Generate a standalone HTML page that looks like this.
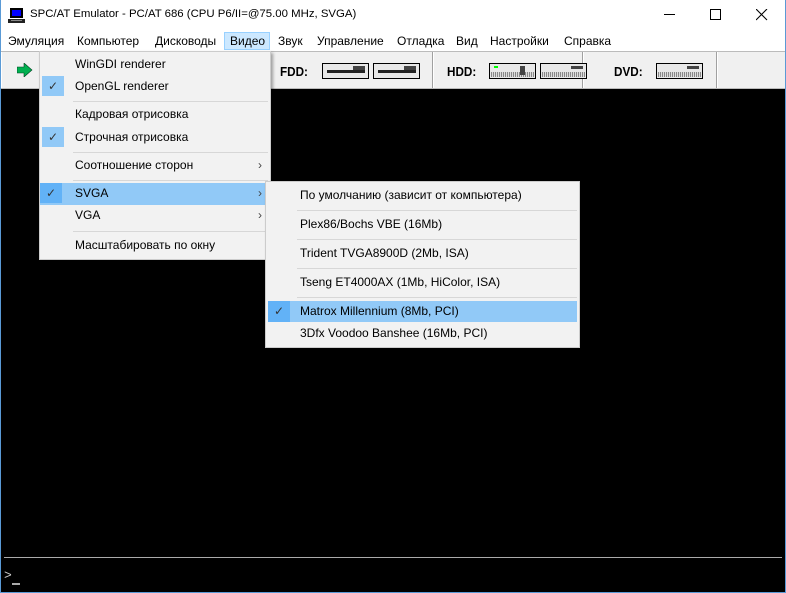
<!DOCTYPE html>
<html><head><meta charset="utf-8"><style>
*{margin:0;padding:0;box-sizing:border-box}
body{width:786px;height:593px;overflow:hidden;background:#000;font-family:"Liberation Sans","DejaVu Sans",sans-serif;font-size:12px;color:#000;position:relative}
.abs{position:absolute}
#frame{left:0;top:0;width:786px;height:593px;border:1px solid #5a9ad6;border-top:none}
#title{left:0;top:0;width:786px;height:32px;background:#fff}
#menubar{left:0;top:32px;width:786px;height:19px;background:#fff}
.mi{position:absolute;top:2px;font-size:12px}
#tb{left:1px;top:51px;width:784px;height:38px;background:#f0f0f0;border-top:1px solid #bbb;border-bottom:1px solid #bbb}
.sep{position:absolute;top:0;width:2px;height:36px;border-left:1px solid #a0a0a0;border-right:1px solid #fff}
.lbl{position:absolute;top:12px;font-weight:bold;font-size:13px;transform:scaleX(.9);transform-origin:left}
.dev{position:absolute;top:11px;width:47px;height:16px;border:1px solid #000;background:#e8e8e8}
.menu{background:#f2f2f2;border:1px solid #ccc;box-shadow:2px 2px 3px rgba(0,0,0,.35)}
.it{position:absolute;left:0;right:0;height:22px;line-height:20px}
.it span{position:absolute}
.hs{position:absolute;height:1px;background:#d7d7d7}
.hl{background:#91c9f7}
.chk{position:absolute;width:22px;height:20px;background:#91c9f7;text-align:center;line-height:20px;color:#333}
.arr{position:absolute;right:8px;color:#444;font-size:12px}
</style></head><body>
<div id="title" class="abs">
<svg class="abs" style="left:8px;top:7px" width="18" height="17"><rect x="2" y="1" width="13" height="10" fill="#000"/><rect x="4" y="3" width="9" height="6" fill="#0000ff"/><rect x="0" y="12" width="17" height="4" fill="#222"/><rect x="3" y="13" width="11" height="1" fill="#888"/></svg>
<div class="abs" style="left:30px;top:8px;font-size:11.4px">SPC/AT Emulator - PC/AT 686 (CPU P6/II=@75.00 MHz, SVGA)</div>
<div class="abs" style="left:664px;top:14px;width:11px;height:1px;background:#000"></div>
<div class="abs" style="left:710px;top:9px;width:11px;height:11px;border:1px solid #000"></div>
<svg class="abs" style="left:756px;top:9px" width="12" height="12"><path d="M0 0L11 11M11 0L0 11" stroke="#000" stroke-width="1.1"/></svg>
</div>
<div id="menubar" class="abs">
<div class="abs" style="left:224px;top:0;width:46px;height:18px;background:#cce8ff;border:1px solid #99d1ff"></div>
<span class="mi" style="left:8px">Эмуляция</span><span class="mi" style="left:77px">Компьютер</span><span class="mi" style="left:155px">Дисководы</span><span class="mi" style="left:230px">Видео</span><span class="mi" style="left:278px">Звук</span><span class="mi" style="left:317px">Управление</span><span class="mi" style="left:397px">Отладка</span><span class="mi" style="left:456px">Вид</span><span class="mi" style="left:490px">Настройки</span><span class="mi" style="left:564px">Справка</span>
</div>
<div id="tb" class="abs">
<div class="abs" style="left:0;top:0;width:2px;height:36px;border-left:1px solid #fff"></div>
<svg class="abs" style="left:16px;top:11px" width="16" height="14"><path d="M0 4H7V0L15 7L7 14V10H0Z" fill="#00b050" stroke="#004020" stroke-width=".6"/></svg>
<div class="sep" style="left:431px"></div><div class="sep" style="left:581px"></div><div class="sep" style="left:715px"></div>
<span class="lbl" style="left:279px">FDD:</span>
<div class="dev" style="left:321px"><div class="abs" style="left:4px;top:6px;width:38px;height:3px;background:#222"></div><div class="abs" style="left:30px;top:2px;width:12px;height:4px;background:#444"></div></div>
<div class="dev" style="left:372px"><div class="abs" style="left:4px;top:6px;width:38px;height:3px;background:#222"></div><div class="abs" style="left:30px;top:2px;width:12px;height:4px;background:#444"></div></div>
<span class="lbl" style="left:446px">HDD:</span>
<div class="dev" style="left:488px"><div class="abs" style="left:4px;top:2px;width:4px;height:2px;background:#0f0"></div><div class="abs" style="left:1px;top:8px;width:43px;height:5px;background:repeating-linear-gradient(90deg,#888 0 1px,#ddd 1px 2px)"></div><div class="abs" style="left:30px;top:2px;width:5px;height:9px;background:#444"></div></div>
<div class="dev" style="left:539px"><div class="abs" style="left:1px;top:8px;width:43px;height:5px;background:repeating-linear-gradient(90deg,#888 0 1px,#ddd 1px 2px)"></div><div class="abs" style="left:30px;top:2px;width:12px;height:3px;background:#444"></div></div>
<span class="lbl" style="left:613px">DVD:</span>
<div class="dev" style="left:655px"><div class="abs" style="left:1px;top:8px;width:43px;height:5px;background:repeating-linear-gradient(90deg,#888 0 1px,#ddd 1px 2px)"></div><div class="abs" style="left:30px;top:2px;width:12px;height:3px;background:#444"></div></div>
</div>
<div class="abs" style="left:4px;top:557px;width:778px;height:1px;background:#aaa"></div>
<div class="abs" style="left:4px;top:568px;color:#ccc;font-family:'Liberation Mono',monospace;font-size:13px">&gt;</div>
<div class="abs" style="left:12px;top:583px;width:8px;height:2px;background:#aaa"></div>
<div id="frame" class="abs"></div>

<div class="abs menu" style="left:39px;top:51px;width:232px;height:209px">
<div class="it" style="top:2px"><span style="left:35px">WinGDI renderer</span></div>
<div class="it" style="top:24px"><div class="chk" style="left:2px">✓</div><span style="left:35px">OpenGL renderer</span></div>
<div class="hs" style="left:33px;right:2px;top:49px"></div>
<div class="it" style="top:52px"><span style="left:35px">Кадровая отрисовка</span></div>
<div class="it" style="top:75px"><div class="chk" style="left:2px">✓</div><span style="left:35px">Строчная отрисовка</span></div>
<div class="hs" style="left:33px;right:2px;top:100px"></div>
<div class="it" style="top:103px"><span style="left:35px">Соотношение сторон</span><span class="arr">›</span></div>
<div class="hs" style="left:33px;right:2px;top:128px"></div>
<div class="it hl" style="top:131px"><div class="chk" style="left:0;background:#62b2f7">✓</div><span style="left:35px">SVGA</span><span class="arr">›</span></div>
<div class="it" style="top:153px"><span style="left:35px">VGA</span><span class="arr">›</span></div>
<div class="hs" style="left:33px;right:2px;top:179px"></div>
<div class="it" style="top:183px"><span style="left:35px">Масштабировать по окну</span></div>
</div>

<div class="abs menu" style="left:265px;top:181px;width:315px;height:167px">
<div class="it" style="top:3px"><span style="left:34px">По умолчанию (зависит от компьютера)</span></div>
<div class="hs" style="left:31px;right:2px;top:28px"></div>
<div class="it" style="top:32px"><span style="left:34px">Plex86/Bochs VBE (16Mb)</span></div>
<div class="hs" style="left:31px;right:2px;top:57px"></div>
<div class="it" style="top:61px"><span style="left:34px">Trident TVGA8900D (2Mb, ISA)</span></div>
<div class="hs" style="left:31px;right:2px;top:86px"></div>
<div class="it" style="top:90px"><span style="left:34px">Tseng ET4000AX (1Mb, HiColor, ISA)</span></div>
<div class="hs" style="left:31px;right:2px;top:115px"></div>
<div class="it hl" style="top:119px;left:2px;right:2px;height:21px"><div class="chk" style="left:0;background:#62b2f7;height:21px">✓</div><span style="left:32px">Matrox Millennium (8Mb, PCI)</span></div>
<div class="it" style="top:141px"><span style="left:34px">3Dfx Voodoo Banshee (16Mb, PCI)</span></div>
</div>
</body></html>
